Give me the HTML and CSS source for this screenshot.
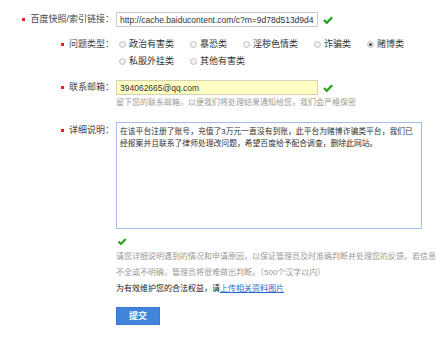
FILE: index.html
```html
<!DOCTYPE html>
<html lang="zh-CN">
<head>
<meta charset="utf-8">
<title>投诉表单</title>
<link rel="stylesheet" href="styles.css">
</head>
<body>
<div class="form">
  <div class="row row-url">
    <div class="label"><span class="req-text">百度快照/索引链接：</span></div>
    <div class="field inline">
      <input class="text" type="text" value="http://cache.baiducontent.com/c?m=9d78d513d9d43ae4f">
      <svg class="ok" viewBox="0 0 10 8" width="10" height="8"><path d="M1 4 L3.8 6.8 L9.2 1.2" /></svg>
    </div>
  </div>

  <div class="row row-type">
    <div class="label"><span class="req-text">问题类型：</span></div>
    <div class="field radios">
      <label class="radio"><span class="dot"></span>政治有害类</label>
      <label class="radio"><span class="dot"></span>暴恐类</label>
      <label class="radio"><span class="dot"></span>淫秽色情类</label>
      <label class="radio"><span class="dot"></span>诈骗类</label>
      <label class="radio"><span class="dot checked"></span>赌博类</label>
      <label class="radio"><span class="dot"></span>私服外挂类</label>
      <label class="radio"><span class="dot"></span>其他有害类</label>
    </div>
  </div>

  <div class="row row-mail">
    <div class="label"><span class="req-text">联系邮箱：</span></div>
    <div class="field">
      <div class="inline">
        <input class="text filled" type="text" value="394062665@qq.com">
        <svg class="ok" viewBox="0 0 10 8" width="10" height="8"><path d="M1 4 L3.8 6.8 L9.2 1.2" /></svg>
      </div>
      <div class="tip">留下您的联系邮箱，以便我们将处理结果通知给您，我们会严格保密</div>
    </div>
  </div>

  <div class="row row-desc">
    <div class="label label-top"><span class="req-text">详细说明：</span></div>
    <div class="field">
      <div class="area">在该平台注册了账号，充值了3万元一直没有到账，此平台为赌博诈骗类平台，我们已<br>经报案并且联系了律师处理改问题，希望百度给予配合调查，删除此网站。</div>
      <svg class="ok ok-below" viewBox="0 0 10 8" width="10" height="8"><path d="M1 4 L3.8 6.8 L9.2 1.2" /></svg>
      <div class="notes">
        <div class="note">请您详细说明遇到的情况和申请原因，以保证管理员及时准确判断并处理您的反馈。若信息</div>
        <div class="note">不全或不明确，管理员将很难做出判断。（500个汉字以内）</div>
        <div class="note dark">为有效维护您的合法权益，请<a class="link" href="#">上传相关资料图片</a></div>
      </div>
      <button class="submit" type="button">提交</button>
    </div>
  </div>
</div>
</body>
</html>
```

FILE: styles.css
```css
body {
  margin: 0;
  background: #fff;
  font-family: "Liberation Sans", "Noto Sans CJK SC", sans-serif;
  color: #333;
}

.form {
  padding-top: 12px;
}

.row {
  display: flex;
  align-items: flex-start;
}

.label {
  width: 114px;
  flex: none;
  text-align: right;
  font-size: 9px;
  line-height: 15px;
  white-space: nowrap;
  color: #444;
}

.req-text {
  display: inline-block;
  padding-left: 8px;
  background: linear-gradient(#e3241e, #e3241e) no-repeat 0 6px / 3px 3px;
}

.row-type .req-text {
  background-position: 0 7px;
}

.field {
  margin-left: 2px;
}

.inline {
  display: flex;
  align-items: center;
}

.text {
  box-sizing: border-box;
  width: 202px;
  height: 15px;
  margin: 0;
  padding: 0 3px;
  border: 1px solid #cacaca;
  font-family: "Liberation Sans", sans-serif;
  font-size: 8.5px;
  color: #333;
  background: #fff;
  outline: none;
}

.text.filled {
  background: #ffffc4;
  border-color: #d4d4b4;
}

.ok {
  flex: none;
  margin-left: 5px;
  display: block;
}

.ok path {
  fill: none;
  stroke: #27a01d;
  stroke-width: 2.3;
}

/* radios */
.row-type {
  margin-top: 9px;
}

.row-type .label {
  line-height: 17px;
}

.radios {
  display: flex;
  flex-wrap: wrap;
  width: 312px;
  padding-left: 3px;
  box-sizing: border-box;
}

.radio {
  display: flex;
  align-items: center;
  margin-right: 16px;
  font-size: 9px;
  line-height: 17px;
  color: #333;
  white-space: nowrap;
}

.dot {
  box-sizing: border-box;
  width: 7px;
  height: 7px;
  margin-right: 3px;
  border-radius: 50%;
  border: 1px solid #c2c2c2;
  background: radial-gradient(circle at 50% 40%, #fafafa 0%, #e2e2e2 100%);
  display: flex;
  align-items: center;
  justify-content: center;
}

.dot.checked::after {
  content: "";
  width: 3px;
  height: 3px;
  border-radius: 50%;
  background: #444;
}

/* email */
.row-mail {
  margin-top: 10px;
}

.tip {
  margin-top: 2px;
  font-size: 8px;
  line-height: 12px;
  color: #9a9a9a;
  white-space: nowrap;
}

/* description */
.row-desc {
  margin-top: 13px;
}

.label-top {
  margin-top: 1px;
}

.area {
  box-sizing: border-box;
  width: 306px;
  height: 107px;
  padding: 3px;
  border: 1px solid #a6c0ee;
  font-size: 7.8px;
  line-height: 11.5px;
  color: #333;
  white-space: nowrap;
  overflow: hidden;
}

.ok-below {
  margin: 9px 0 0 1px;
  width: 10px;
  height: 7px;
}

.notes {
  margin-top: 4px;
}

.note {
  font-size: 8px;
  line-height: 16px;
  color: #999;
  white-space: nowrap;
}

.note.dark {
  color: #222;
}

.link {
  color: #2c6bcc;
  text-decoration: underline;
}

.submit {
  display: block;
  margin-top: 10px;
  box-sizing: border-box;
  width: 44px;
  height: 18px;
  padding: 0;
  border: 1px solid #3a79cf;
  background: #4085d9;
  color: #fff;
  font-family: "Noto Sans CJK SC", sans-serif;
  font-size: 9px;
  font-weight: bold;
  line-height: 16px;
  cursor: pointer;
}
```
